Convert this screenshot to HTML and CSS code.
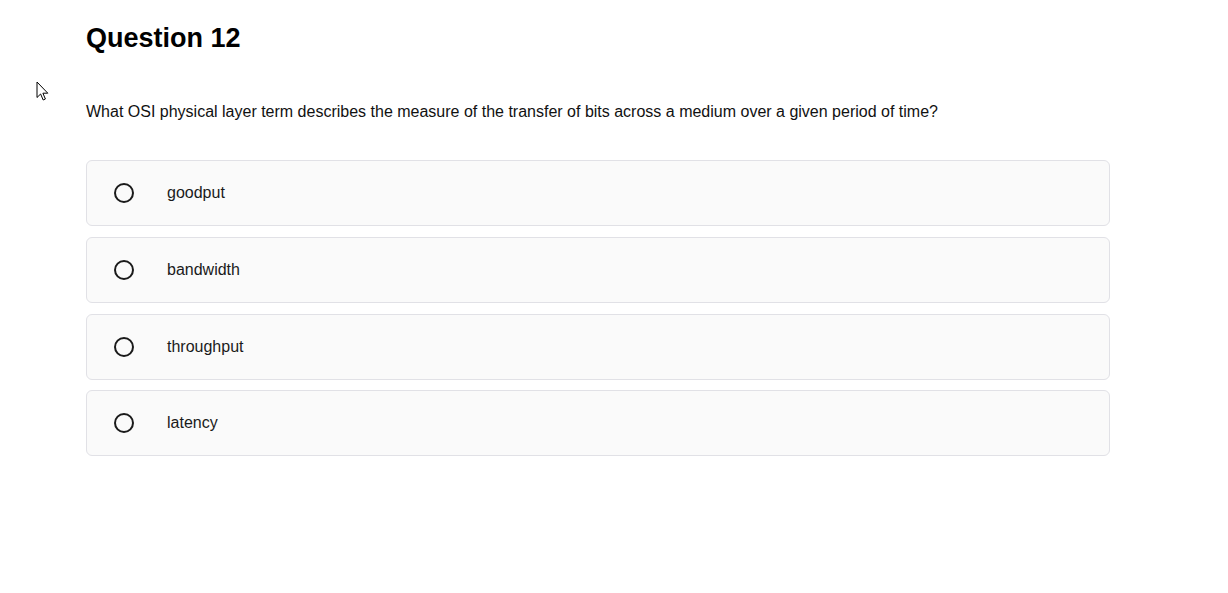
FILE: index.html
```html
<!DOCTYPE html>
<html>
<head>
<meta charset="utf-8">
<link rel="stylesheet" href="styles.css">
</head>
<body>
<svg class="cursor" width="14" height="21" viewBox="0 0 14 21"><path d="M1 1 L1 16.5 L4.6 13 L7.2 19 L9.4 18 L6.9 12.2 L11.8 12.2 Z" fill="#fff" stroke="#000" stroke-width="1" stroke-linejoin="miter"/></svg>
<main class="quiz">
  <h1 class="title">Question 12</h1>
  <p class="prompt">What OSI physical layer term describes the measure of the transfer of bits across a medium over a given period of time?</p>
  <div class="options">
    <label class="option"><span class="radio"></span><span class="label">goodput</span></label>
    <label class="option"><span class="radio"></span><span class="label">bandwidth</span></label>
    <label class="option"><span class="radio"></span><span class="label">throughput</span></label>
    <label class="option"><span class="radio"></span><span class="label">latency</span></label>
  </div>
</main>
</body>
</html>
```
FILE: styles.css
```css
html, body {
  margin: 0;
  padding: 0;
  background: #ffffff;
}
body {
  font-family: "Liberation Sans", Arial, sans-serif;
  color: #000;
  position: relative;
  width: 1228px;
  height: 593px;
  overflow: hidden;
}
.cursor {
  position: absolute;
  left: 36px;
  top: 81px;
}
.quiz {
  padding: 22px 0 0 86px;
  width: 1024px;
}
.title {
  margin: 0;
  font-size: 27px;
  line-height: 32px;
  font-weight: 700;
}
.prompt {
  margin: 48px 0 0 0;
  font-size: 16px;
  line-height: 20px;
  color: #111;
}
.options {
  margin-top: 38.33px;
  display: flex;
  flex-direction: column;
  gap: 10.67px;
}
.option {
  display: flex;
  align-items: center;
  height: 64px;
  border: 1px solid #e1e1e6;
  border-radius: 6px;
  background: #fafafa;
  padding-left: 27px;
}
.radio {
  width: 16px;
  height: 16px;
  border: 2px solid #1a1a1a;
  border-radius: 50%;
  flex: none;
}
.label {
  margin-left: 33px;
  font-size: 16px;
  color: #1a1a1a;
}
```
